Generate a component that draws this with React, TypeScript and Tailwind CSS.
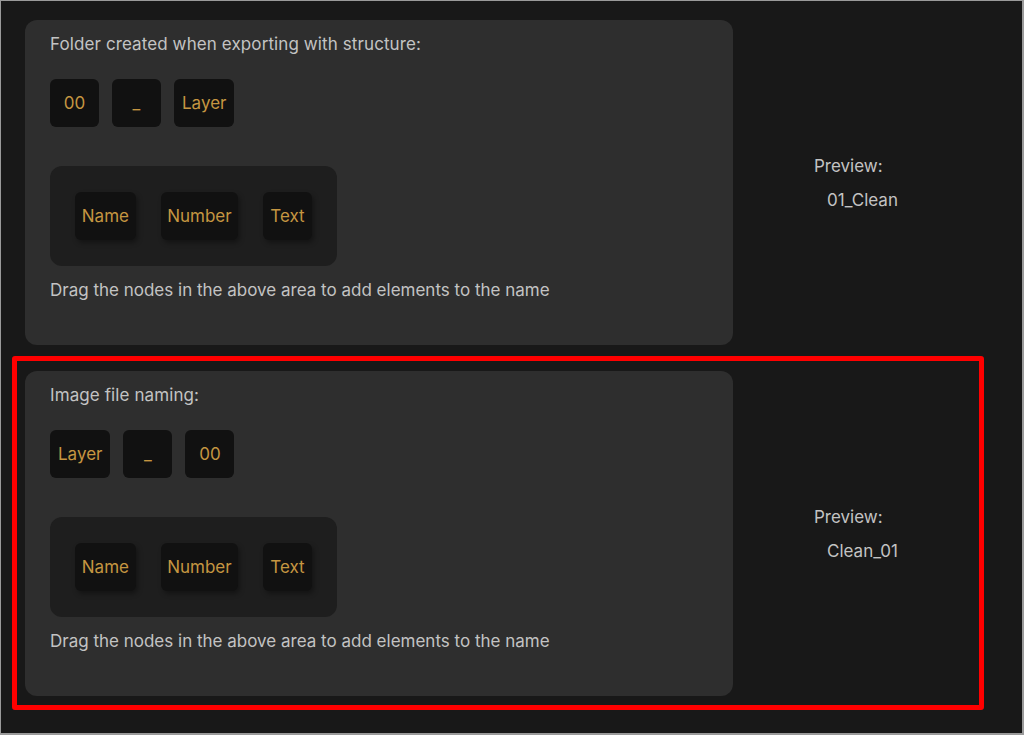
import React from "react";

const font = { fontFamily: "Inter, 'Noto Sans', sans-serif" };

function Chip({ label, shadow }: { label: string; shadow?: boolean }) {
  return (
    <div
      className={
        "flex h-[48px] min-w-[49px] items-center justify-center rounded-[6px] bg-[#111111] px-[8px] pt-[2px] text-[17px] text-[#c59641] " +
        (shadow ? "shadow-[2px_3px_5px_rgba(0,0,0,0.35)]" : "")
      }
    >
      {label}
    </div>
  );
}

function Section({
  title,
  chips,
  preview,
}: {
  title: string;
  chips: string[];
  preview: string;
}) {
  return (
    <div className="flex items-center">
      <div className="flex h-[325px] w-[708px] flex-col rounded-[12px] bg-[#2e2e2e] px-[25px] pt-[14px]">
        <div className="text-[17px] leading-[20px] tracking-[0.1px] text-[#c3c3c3]">{title}</div>
        <div className="mt-[25px] flex gap-[13px]">
          {chips.map((c, i) => (
            <Chip key={i} label={c} />
          ))}
        </div>
        <div className="mt-[39px] flex h-[100px] w-[287px] items-center gap-[25px] rounded-[12px] bg-[#1e1e1e] px-[25px]">
          <Chip label="Name" shadow />
          <Chip label="Number" shadow />
          <Chip label="Text" shadow />
        </div>
        <div className="mt-[14px] text-[17px] leading-[20px] text-[#c3c3c3]">
          Drag the nodes in the above area to add elements to the name
        </div>
      </div>
      <div className="ml-[81px] flex flex-col text-[17px] leading-[20px] text-[#c3c3c3]">
        <div>Preview:</div>
        <div className="ml-[13px] mt-[14px]">{preview}</div>
      </div>
    </div>
  );
}

export default function App() {
  return (
    <div
      style={font}
      className="relative h-[735px] w-[1024px] overflow-hidden border-b-2 border-l border-r-2 border-t border-[#9a9a9a] bg-[#181818]"
    >
      <div className="flex flex-col gap-[26px] pl-[24px] pt-[19px]">
        <Section
          title="Folder created when exporting with structure:"
          chips={["00", "_", "Layer"]}
          preview="01_Clean"
        />
        <Section
          title="Image file naming:"
          chips={["Layer", "_", "00"]}
          preview="Clean_01"
        />
      </div>
      <div className="pointer-events-none absolute left-[11px] top-[355px] h-[354px] w-[972px] rounded-[3px] border-[5px] border-[#ff0000]" />
    </div>
  );
}
